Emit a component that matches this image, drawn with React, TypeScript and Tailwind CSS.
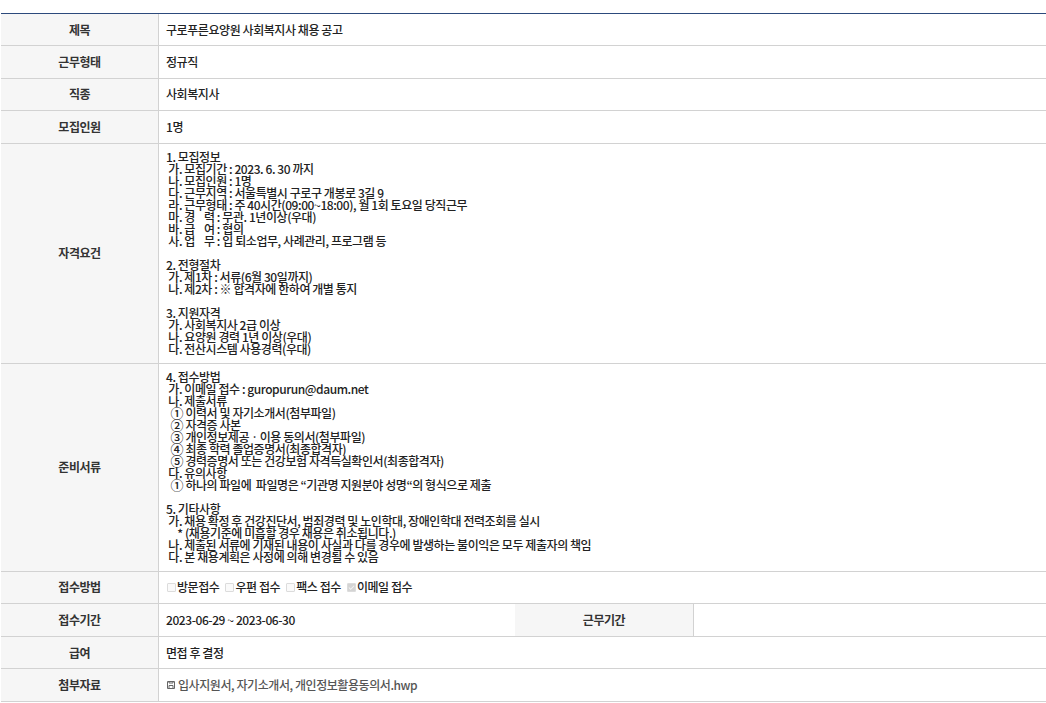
const qualification = [
  "1. 모집정보",
  " 가. 모집기간 : 2023. 6. 30 까지",
  " 나. 모집인원 : 1명",
  " 다. 근무지역 : 서울특별시 구로구 개봉로 3길 9",
  " 라. 근무형태 : 주 40시간(09:00~18:00), 월 1회 토요일 당직근무",
  " 마. 경    력 : 무관. 1년이상(우대)",
  " 바. 급    여 : 협의",
  " 사. 업    무 : 입 퇴소업무, 사례관리, 프로그램 등",
  "",
  "2. 전형절차",
  " 가. 제1차 : 서류(6월 30일까지)",
  " 나. 제2차 : ※ 합격자에 한하여 개별 통지",
  "",
  "3. 지원자격",
  " 가. 사회복지사 2급 이상",
  " 나. 요양원 경력 1년 이상(우대)",
  " 다. 전산시스템 사용경력(우대)",
];

const documents = [
  "4. 접수방법",
  " 가. 이메일 접수 : guropurun@daum.net",
  " 나. 제출서류",
  "  ① 이력서 및 자기소개서(첨부파일)",
  "  ② 자격증 사본",
  "  ③ 개인정보제공ㆍ이용 동의서(첨부파일)",
  "  ④ 최종 학력 졸업증명서(최종합격자)",
  "  ⑤ 경력증명서 또는 건강보험 자격득실확인서(최종합격자)",
  " 다. 유의사항",
  "  ① 하나의 파일에  파일명은 “기관명 지원분야 성명“의 형식으로 제출",
  "",
  "5. 기타사항",
  " 가. 채용 확정 후 건강진단서, 범죄경력 및 노인학대, 장애인학대 전력조회를 실시",
  "     * (채용기준에 미흡할 경우 채용은 취소됩니다.)",
  " 나. 제출된 서류에 기재된 내용이 사실과 다를 경우에 발생하는 불이익은 모두 제출자의 책임",
  " 다. 본 채용계획은 사정에 의해 변경될 수 있음",
];

const Label = ({ children, className = "" }: { children: React.ReactNode; className?: string }) => (
  <div className={`flex items-center justify-center bg-[#f6f6f6] font-bold text-[#333] ${className}`}>{children}</div>
);

const Row = ({ label, children, className = "h-[32.4px]" }: { label: string; children: React.ReactNode; className?: string }) => (
  <div className={`flex border-b border-[#d2d2d2] ${className}`}>
    <Label className="w-[158px] shrink-0 border-r border-[#d2d2d2]">{label}</Label>
    <div className="flex min-w-0 flex-1 items-center pl-[7px] text-[#222]">{children}</div>
  </div>
);

const Lines = ({ lines }: { lines: string[] }) => (
  <div className="whitespace-pre leading-[12px]">
    {lines.map((line, i) => (
      <div key={i} className="h-[12px]">
        {line.split(/([①-⑤])/).map((part, j) =>
          /[①-⑤]/.test(part) ? <span key={j} className="align-top text-[13px] leading-[12px]">{part}</span> : part
        )}
      </div>
    ))}
  </div>
);

const Check = ({ checked, label }: { checked?: boolean; label: string }) => (
  <span className="mr-[5px] flex items-center">
    <span className={`mr-[1px] ml-[1px] flex h-[9px] w-[9px] items-center justify-center rounded-[1px] border border-[#dcdcdc] ${checked ? "bg-[#d4d4d4]" : "bg-[#fafafa]"}`}>
      {checked && (
        <svg viewBox="0 0 8 8" className="h-[7px] w-[7px]">
          <path d="M1 4l2 2 4-4" fill="none" stroke="#f4f4f4" strokeWidth="1.2" />
        </svg>
      )}
    </span>
    {label}
  </span>
);

export default function App() {
  return (
    <div className="min-h-[703px] bg-white pt-[13px] pl-px text-[12px] font-medium tracking-[-0.43px]" style={{ fontFamily: '"Noto Sans CJK KR", "Noto Sans", sans-serif' }}>
      <div className="border-t border-[#2c4a7c]">
        <Row label="제목">구로푸른요양원 사회복지사 채용 공고</Row>
        <Row label="근무형태">정규직</Row>
        <Row label="직종">사회복지사</Row>
        <Row label="모집인원">1명</Row>
        <Row label="자격요건" className="h-[220px]"><Lines lines={qualification} /></Row>
        <Row label="준비서류" className="h-[208px]"><Lines lines={documents} /></Row>
        <Row label="접수방법">
          <Check label="방문접수" />
          <Check label="우편 접수" />
          <Check label="팩스 접수" />
          <Check checked label="이메일 접수" />
        </Row>
        <div className="flex h-[33px] border-b border-[#d2d2d2] text-[#222]">
          <Label className="w-[158px] shrink-0 border-r border-[#d2d2d2]">접수기간</Label>
          <div className="flex w-[356px] shrink-0 items-center pl-[7px]">2023-06-29 ~ 2023-06-30</div>
          <Label className="w-[179px] shrink-0 border-r border-[#d2d2d2]">근무기간</Label>
          <div className="flex-1" />
        </div>
        <Row label="급여">면접 후 결정</Row>
        <Row label="첨부자료">
          <span className="flex items-center text-[#555]">
            <svg viewBox="0 0 8 8" className="mr-[3px] ml-px h-[8px] w-[8px]">
              <path d="M.5.5h7v7h-7zM2 .5v1.5h4V.5M2 7.5V4.5h4v3" fill="none" stroke="#666" />
            </svg>
            입사지원서, 자기소개서, 개인정보활용동의서.hwp
          </span>
        </Row>
      </div>
    </div>
  );
}
